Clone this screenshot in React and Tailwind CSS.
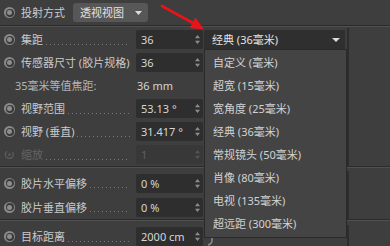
import React from "react";

const Radio = ({ dim }) =>
  dim ? (
    <svg width="11" height="11" viewBox="0 0 11 11">
      <path d="M8.5 3 A4 4 0 1 1 3 2.2" fill="none" stroke="#5c5c5c" strokeWidth="1.3" />
      <circle cx="5.5" cy="5.5" r="1.6" fill="#555" />
    </svg>
  ) : (
    <div className="w-[11px] h-[11px] rounded-full bg-[#8a8a8a] flex items-center justify-center">
      <div className="w-[8px] h-[8px] rounded-full bg-[#3a3a3a] flex items-center justify-center">
        <div className="w-[5px] h-[5px] rounded-full bg-[#8d8d8d]" />
      </div>
    </div>
  );

const Spin = ({ dim }) => (
  <svg width="5" height="9" viewBox="0 0 5 9">
    <path d="M2.5 0 L5 3.2 H0Z M0 5.8 H5 L2.5 9Z" fill={dim ? "#555" : "#8c8c8c"} />
  </svg>
);

const Input = ({ value, dim }) => (
  <div
    className={`flex items-center w-[67px] h-[19px] rounded-[2px] pl-[5px] pr-[3px] ${
      dim ? "bg-[#383838]" : "bg-[#2e2e2e]"
    }`}
  >
    <span className={`flex-1 ${dim ? "text-[#606060]" : "text-[#d6d6d6]"}`}>{value}</span>
    <Spin dim={dim} />
  </div>
);

const Leader = () => (
  <div className="flex-1 h-[1px] mt-[9px] ml-[3px] mr-[6px] bg-[linear-gradient(to_right,#7a7a7a_1px,transparent_1px)] bg-[length:4px_1px] bg-repeat-x" />
);

const Row = ({ label, value, dim, h = "h-[23px]", children }) => (
  <div className={`flex items-center ${h}`}>
    <div className="w-[21px] flex items-center pl-[4px]">
      <Radio dim={dim} />
    </div>
    <div className="flex items-center w-[115px]">
      <span className={`whitespace-nowrap ${dim ? "text-[#646464]" : "text-[#cacaca]"}`}>{label}</span>
      <Leader />
    </div>
    <Input value={value} dim={dim} />
    <div className="w-[144px] pl-[1px]">{children}</div>
    <div className="flex-1 self-stretch border-l-2 border-[#2d2d2d]" />
  </div>
);

const Sep = () => <div className="h-[2px] border-t border-[#2b2b2b] bg-[#505050]" />;

const items = [
  "自定义 (毫米)",
  "超宽 (15毫米)",
  "宽角度 (25毫米)",
  "经典 (36毫米)",
  "常规镜头 (50毫米)",
  "肖像 (80毫米)",
  "电视 (135毫米)",
  "超远距 (300毫米)",
];

export default function App() {
  return (
    <div className="relative w-[390px] h-[246px] overflow-hidden bg-[#3e3e3e] text-[11px] leading-none text-[#c9c9c9] font-['Noto_Sans','Noto_Sans_CJK_SC',sans-serif]">
      {/* top row */}
      <div className="flex items-center h-[25px]">
        <div className="w-[21px] flex items-center pl-[4px]">
          <Radio />
        </div>
        <span className="text-[#cacaca]">投射方式</span>
        <div className="ml-[8px] flex items-center w-[75px] h-[19px] rounded-[3px] bg-[#575757] pl-[7px] pr-[6px]">
          <span className="flex-1 text-[#e2e2e2]">透视视图</span>
          <svg width="7" height="4" viewBox="0 0 7 4">
            <path d="M0 0 H7 L3.5 4Z" fill="#dcdcdc" />
          </svg>
        </div>
      </div>
      <Sep />
      <div className="h-[1px]" />

      <Row label="集距" value="36">
        <div className="flex items-center h-[19px] w-[141px] bg-[#2f2f2f] pl-[8px] pr-[5px] rounded-[1px]">
          <span className="flex-1 text-[#e2e2e2]">经典 (36毫米)</span>
          <svg width="8" height="4" viewBox="0 0 8 4">
            <path d="M0 0 H8 L4 4Z" fill="#dcdcdc" />
          </svg>
        </div>
      </Row>
      <Row label="传感器尺寸 (胶片规格)" value="36" />
      <div className="flex items-center h-[23px]">
        <div className="w-[136px] pl-[15px] text-[#b4b4b4]">35毫米等值焦距:</div>
        <div className="w-[211px] pl-[1px] text-[#d4d4d4]">36 mm</div>
        <div className="flex-1 self-stretch border-l-2 border-[#2d2d2d]" />
      </div>
      <Row label="视野范围" value="53.13 °" />
      <Row label="视野 (垂直)" value="31.417 °" />
      <Row label="缩放" value="1" dim />
      <Sep />
      <div className="h-[3px]" />
      <Row label="胶片水平偏移" value="0 %" h="h-[24px]" />
      <Row label="胶片垂直偏移" value="0 %" h="h-[24px]" />
      <Sep />
      <div className="h-[4px]" />
      <Row label="目标距离" value="2000 cm" />

      {/* small partially visible icon */}
      <svg className="absolute left-[204px] top-[234px]" width="14" height="12" viewBox="0 0 14 12">
        <path d="M6 2 A5 5 0 0 1 4 11" fill="none" stroke="#8a8a8a" strokeWidth="1.5" />
      </svg>

      {/* open dropdown menu */}
      <div className="absolute left-[204px] top-[49px] w-[143px] h-[189px] bg-[#444444] border border-[#2a2a2a] py-[1px]">
        {items.map((t) => (
          <div key={t} className="h-[23px] flex items-center pl-[8px] text-[#d2d2d2]">
            {t}
          </div>
        ))}
      </div>

      {/* red arrow annotation */}
      <svg className="absolute left-0 top-0 pointer-events-none" width="390" height="40" viewBox="0 0 390 40">
        <line x1="162" y1="6" x2="193" y2="23" stroke="#e8141a" strokeWidth="2.6" strokeLinecap="round" />
        <path d="M204 29.5 L189.6 28 L195.4 17.5 Z" fill="#e8141a" />
      </svg>
    </div>
  );
}
